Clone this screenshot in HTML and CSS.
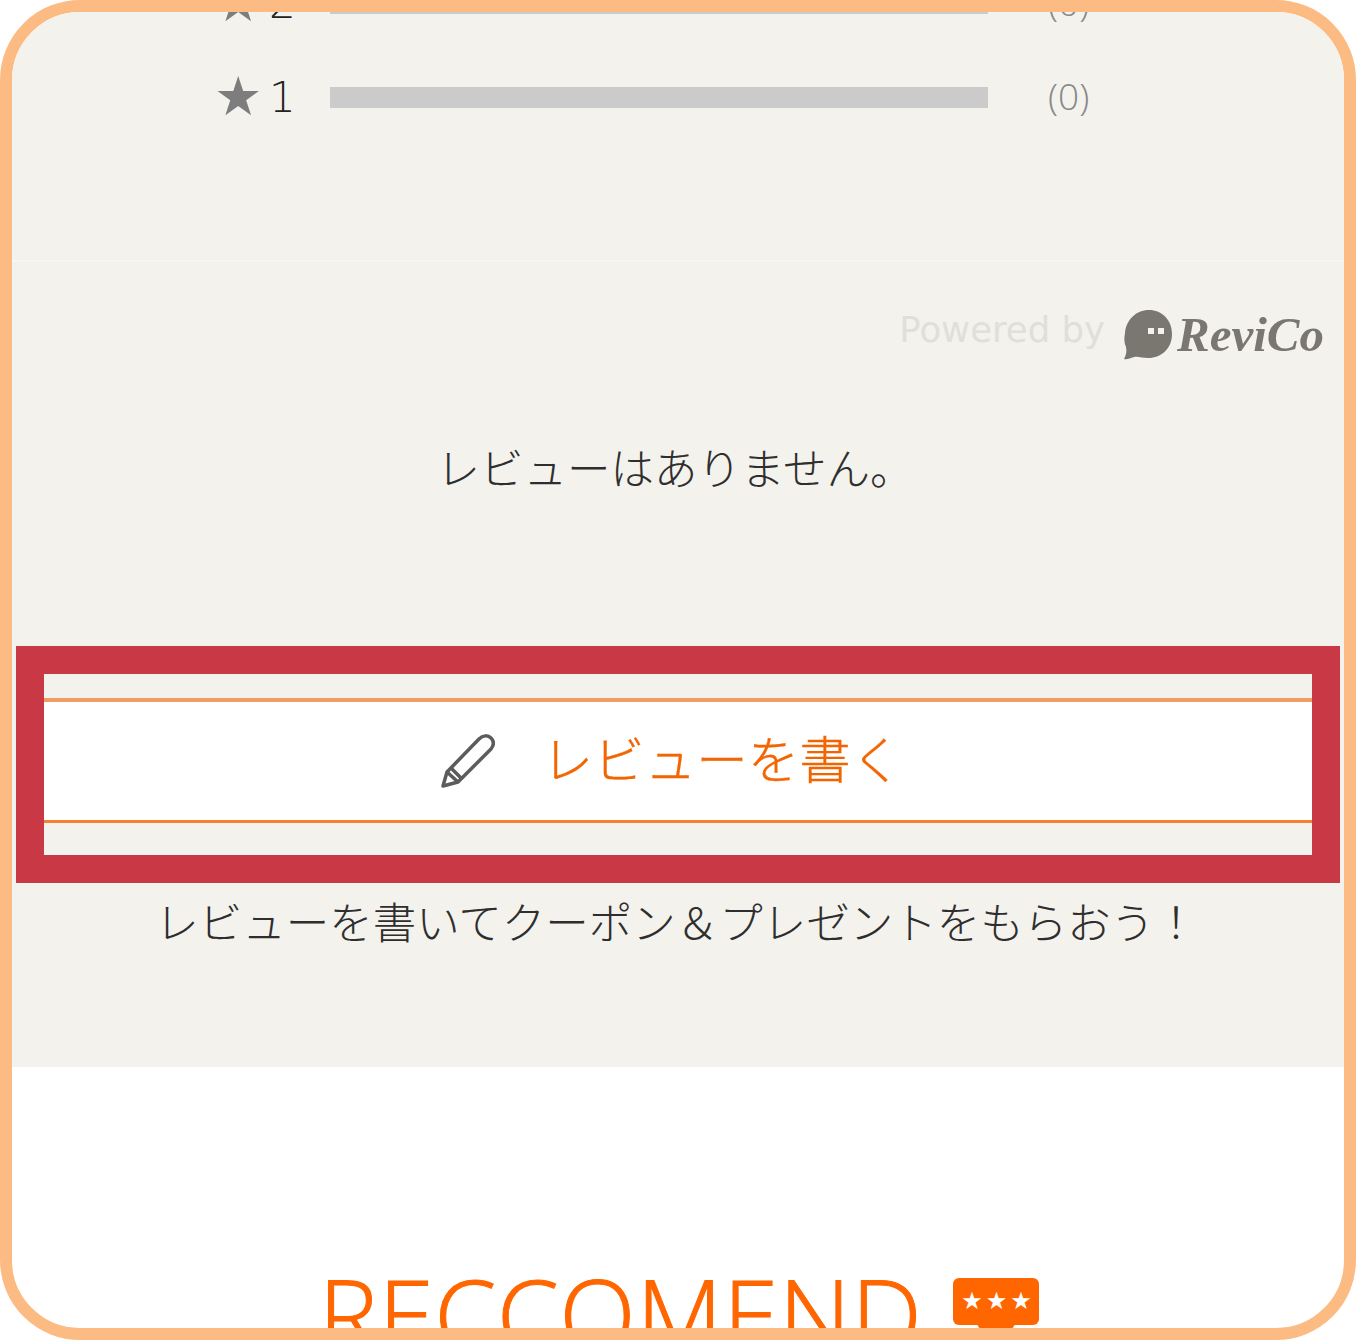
FILE: index.html
```html
<!DOCTYPE html>
<html lang="ja">
<head>
<meta charset="utf-8">
<title>レビュー</title>
<link rel="stylesheet" href="styles.css">
</head>
<body>
<div class="frame">
  <section class="review">
    <div class="ratings">
      <div class="rating-row">
        <span class="star">★</span><span class="num">2</span>
        <span class="bar"></span><span class="count">(0)</span>
      </div>
      <div class="rating-row">
        <span class="star">★</span><span class="num">1</span>
        <span class="bar"></span><span class="count">(0)</span>
      </div>
    </div>
    <div class="powered">
      <span class="powered-text">Powered by</span>
      <svg class="bubble" viewBox="0 0 48 50" aria-hidden="true">
        <path class="bubble-fill" d="M25 0C38 0 48 10 48 24C48 38 38 48 24 48C18 48 14 46 10 47C6 48 3 50 0 49C2 45 3 42 2 37C0 33 0 28 1 23C2 10 12 0 25 0Z"/>
        <rect class="bubble-eye" x="24" y="18" width="6" height="6"/>
        <rect class="bubble-eye" x="34" y="18" width="6" height="6"/>
      </svg>
      <span class="logo-text">ReviCo</span>
    </div>
    <p class="empty">レビューはありません。</p>
    <div class="highlight">
      <a class="write-btn" href="#">
        <svg class="pencil" viewBox="0 0 54 54" aria-hidden="true">
          <path class="pencil-line" d="M2 52L6 38L38 5C42 1 47 1 50 4C53 7 53 11 50 15L17 48Z"/>
          <path class="pencil-line" d="M6 38L17 48M10 34L20 44"/>
        </svg>
        <span class="write-label">レビューを書く</span>
      </a>
    </div>
    <p class="promo">レビューを書いてクーポン＆プレゼントをもらおう！</p>
  </section>
  <section class="recommend">
    <h2 class="recommend-title">RECCOMEND</h2>
    <span class="badge"><span class="badge-stars">★★★</span></span>
  </section>
</div>
</body>
</html>
```
FILE: styles.css
```css
* { box-sizing: border-box; }
html, body { margin: 0; padding: 0; background: #fff; }
body { font-family: "Noto Sans CJK JP", "Noto Sans", sans-serif; }

.frame {
  width: 1356px;
  height: 1340px;
  border: 12px solid #fdbb84;
  border-radius: 80px;
  overflow: hidden;
  background: #fff;
}

.review {
  height: 1055px;
  background: #f4f2ed;
  display: flex;
  flex-direction: column;
}

.ratings {
  height: 250px;
  flex: none;
  border-bottom: 2px solid #f8f6f2;
  display: flex;
  flex-direction: column;
  justify-content: flex-end;
  padding-bottom: 116px;
  overflow: hidden;
}

.rating-row {
  display: flex;
  align-items: center;
  height: 94px;
  flex: none;
  padding-left: 202px;
}
.star {
  width: 47px;
  font-family: "DejaVu Sans", sans-serif;
  font-size: 54px;
  line-height: 1;
  color: #7d7d7d;
}
.num {
  width: 69px;
  font-family: "DejaVu Sans", sans-serif;
  font-size: 42px;
  font-weight: 300;
  color: #222;
  padding-left: 8px;
}
.bar {
  width: 658px;
  height: 21px;
  background: #cbcbcb;
}
.count {
  margin-left: 60px;
  margin-bottom: 4px;
  font-family: "Open Sans", sans-serif;
  font-size: 37px;
  font-weight: 300;
  color: #888;
}

.powered {
  display: flex;
  align-items: center;
  justify-content: flex-end;
  height: 50px;
  margin-top: 48px;
  padding-right: 20px;
  flex: none;
}
.powered-text {
  font-family: "DejaVu Sans", sans-serif;
  font-size: 35.5px;
  color: #e0dfdb;
  margin-right: 19px;
  padding-bottom: 12px;
}
.bubble { width: 48px; height: 50px; flex: none; }
.bubble-fill { fill: #7a7770; }
.bubble-eye { fill: #f4f2ed; }
.logo-text {
  margin-left: 5px;
  font-family: "Liberation Serif", serif;
  font-style: italic;
  font-weight: 700;
  font-size: 49px;
  line-height: 50px;
  color: #7a7770;
}

.empty {
  margin: 77px 0 0;
  height: 60px;
  padding-right: 6px;
  text-align: center;
  font-size: 43.5px;
  font-weight: 300;
  line-height: 60px;
  color: #2e2e2e;
  flex: none;
}

.highlight {
  margin: 149px 4px 0;
  height: 237px;
  border: 28px solid #c83945;
  padding-top: 24px;
  flex: none;
}
.write-btn {
  display: flex;
  align-items: center;
  justify-content: center;
  height: 125px;
  background: #fff;
  border-top: 4px solid #f29b63;
  border-bottom: 3px solid #f77f2e;
  text-decoration: none;
  padding-right: 13px;
}
.pencil { width: 54px; height: 54px; flex: none; margin-right: 47px; }
.pencil-line { fill: none; stroke: #5c5c5c; stroke-width: 3.5; stroke-linejoin: round; }
.write-label {
  font-size: 51.5px;
  font-weight: 300;
  line-height: 60px;
  color: #f26500;
  -webkit-text-stroke: 0.3px #f26500;
  margin-bottom: 9px;
}

.promo {
  margin: 8px 0 0;
  padding-right: 3px;
  text-align: center;
  font-size: 43.5px;
  font-weight: 300;
  line-height: 60px;
  color: #2e2e2e;
  flex: none;
}

.recommend {
  height: 261px;
  display: flex;
  align-items: flex-start;
  justify-content: center;
  gap: 31px;
  padding-top: 204px;
  padding-left: 2px;
}
.recommend-title {
  margin: 0;
  font-family: "Open Sans", sans-serif;
  font-size: 100px;
  font-weight: 300;
  letter-spacing: 0.5px;
  line-height: 84px;
  color: #ff6600;
  -webkit-text-stroke: 1px #ff6600;
}
.badge {
  position: relative;
  width: 86px;
  height: 47px;
  margin-top: 7px;
  background: #ff6600;
  border-radius: 6px;
  display: flex;
  align-items: center;
  justify-content: center;
  flex: none;
}
.badge::after {
  content: "";
  position: absolute;
  left: 24px;
  right: 24px;
  bottom: -4px;
  height: 6px;
  background: #ff6600;
  border-radius: 0 0 6px 6px;
}
.badge-stars {
  font-family: "DejaVu Sans", sans-serif;
  font-size: 24px;
  letter-spacing: 3px;
  margin-right: -3px;
  margin-bottom: 1px;
  line-height: 1;
  color: #fff;
}
```
